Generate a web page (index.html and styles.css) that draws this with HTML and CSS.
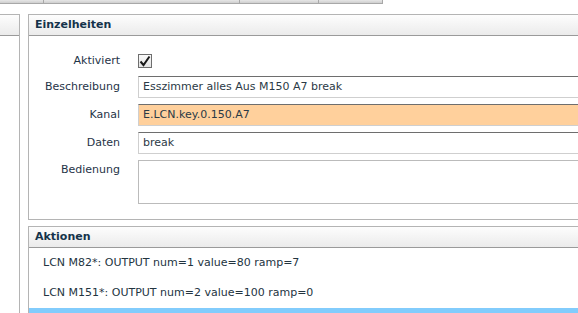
FILE: index.html
```html
<!DOCTYPE html>
<html lang="de">
<head>
    <meta charset="utf-8">
    <title>Einzelheiten</title>
    <link rel="stylesheet" href="styles.css">
</head>
<body>
    <div class="tabs">
        <div class="tab" style="width:44px"></div>
        <div class="tab" style="width:196px"></div>
        <div class="tab" style="width:79px"></div>
        <div class="tab" style="width:64px"></div>
        <div class="tab active"></div>
    </div>

    <div class="workspace">
        <div class="side">
            <div class="panel-head"></div>
        </div>

        <div class="main">
            <div class="panel details">
                <div class="panel-head">Einzelheiten</div>
                <div class="form">
                    <label class="first">Aktiviert</label>
                    <div class="first">
                        <span class="check">
                            <svg width="12" height="12" viewBox="0 0 12 12">
                                <path d="M1.5 6.5 L4.5 10 L10.5 1.5" fill="none" stroke="#1a1a1a" stroke-width="2"/>
                            </svg>
                        </span>
                    </div>

                    <label>Beschreibung</label>
                    <div class="field">Esszimmer alles Aus M150 A7 break</div>

                    <label>Kanal</label>
                    <div class="field marked">E.LCN.key.0.150.A7</div>

                    <label>Daten</label>
                    <div class="field">break</div>

                    <label class="top">Bedienung</label>
                    <div class="area"></div>
                </div>
            </div>

            <div class="panel actions">
                <div class="panel-head">Aktionen</div>
                <div class="action">LCN M82*: OUTPUT num=1 value=80 ramp=7</div>
                <div class="action">LCN M151*: OUTPUT num=2 value=100 ramp=0</div>
                <div class="action selected"></div>
            </div>
        </div>
    </div>
</body>
</html>
```

FILE: styles.css
```css
* {
    box-sizing: border-box;
}

html, body {
    height: 100%;
}

body {
    margin: 0;
    overflow: hidden;
    font-family: "DejaVu Sans", Verdana, sans-serif;
    font-size: 11px;
    color: #333;
    background: #fff;
}

/* tab strip at the top */
.tabs {
    display: flex;
    height: 4px;
}

.tab {
    background: linear-gradient(#e6e6e6, #cfcfcf);
    border-right: 1px solid #a8a8a8;
    border-bottom: 1px solid #a8a8a8;
}

.tab.active {
    flex: 1;
    background: #fff;
    border-right: none;
    border-bottom: none;
}

.workspace {
    display: flex;
    gap: 8px;
    margin-top: 10px;
    height: 299px;
    overflow: hidden;
}

.side {
    width: 20px;
    flex-shrink: 0;
    border-top: 1px solid #b4b4b4;
    border-right: 1px solid #b4b4b4;
}

.main {
    width: 560px;
    flex-shrink: 0;
    display: flex;
    flex-direction: column;
    gap: 6px;
}

.panel {
    border: 1px solid #b4b4b4;
    background: #fff;
}

.panel-head {
    height: 21px;
    line-height: 20px;
    padding-left: 6px;
    background: linear-gradient(#fdfdfd, #ebebeb);
    border-bottom: 1px solid #9a9a9a;
    font-weight: bold;
    color: #15334b;
}

/* form grid */
.form {
    display: grid;
    grid-template-columns: 91px 1fr;
    column-gap: 18px;
    row-gap: 6px;
    padding: 15px 0 15px 0;
}

.form label {
    text-align: right;
    line-height: 20px;
    padding-top: 1px;
    color: #1f3447;
}

.form .first {
    height: 19px;
    line-height: 19px;
    padding-top: 0;
    display: flex;
    align-items: center;
}

.form label.first {
    justify-content: flex-end;
}

.form label.top {
    padding-top: 0;
}

.check {
    width: 14px;
    height: 14px;
    border: 1px solid #6e6e6e;
    background: linear-gradient(#fafafa, #e4e4e4);
    display: flex;
    align-items: center;
    justify-content: center;
}

.field {
    height: 22px;
    line-height: 20px;
    padding-left: 4px;
    border: 1px solid #cfcfcf;
    border-top-color: #6e6e6e;
    color: #2b3a46;
}

.field.marked {
    background: #ffd09c;
}

.area {
    height: 44px;
    border: 1px solid #bbb;
}

/* action list */
.actions {
    flex: 1;
}

.action {
    height: 30px;
    line-height: 30px;
    padding-left: 14px;
    color: #23343f;
}

.action.selected {
    background: #82ccfc;
}
```
